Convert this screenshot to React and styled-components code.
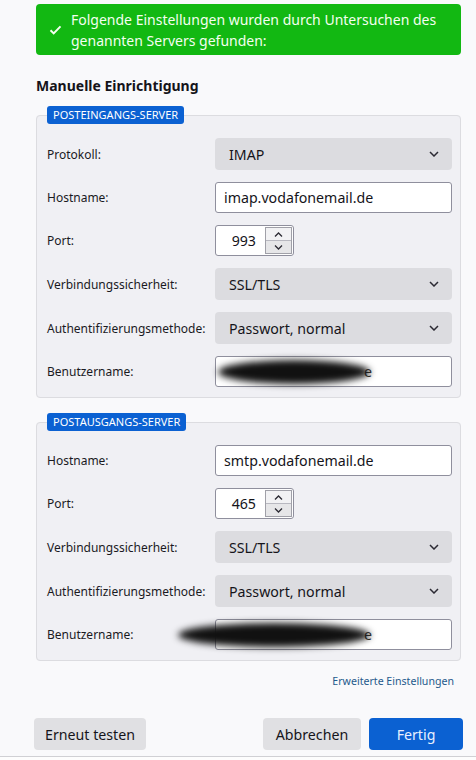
import React from "react";
import styled, { createGlobalStyle } from "styled-components";

const Global = createGlobalStyle`
  html, body { margin: 0; padding: 0; background: #f9f9fb; }
  body { font-family: "Noto Sans", "Open Sans", sans-serif; color: #15141a; }
  * { box-sizing: border-box; }
`;

const Page = styled.div`
  width: 476px;
  height: 760px;
  display: flex;
  flex-direction: column;
  overflow: hidden;
`;

const Main = styled.div`
  flex: 1;
  padding: 4px 15px 0 36px;
  display: flex;
  flex-direction: column;
`;

const Banner = styled.div`
  background: #12b812;
  color: #f4fff0;
  border-radius: 4px;
  height: 51px;
  display: flex;
  align-items: center;
  gap: 9px;
  padding: 0 12px 0 13px;
  font-size: 14px;
  line-height: 21px;
`;

const Heading = styled.h2`
  margin: 21px 0 10px;
  font-size: 14px;
  font-weight: 700;
  line-height: 20px;
`;

const Fieldset = styled.fieldset`
  margin: 0 0 ${p => p.$mb || 0}px;
  padding: 0 10px 10px;
  border: 1px solid #dcdce0;
  border-radius: 4px;
  background: #f0f0f4;
  min-width: 0;
`;

const Legend = styled.legend`
  background: #0b61d2;
  color: #fff;
  font-size: 11px;
  line-height: 18px;
  height: 18px;
  padding: 0 6px;
  border-radius: 3px;
  margin-left: 0;
`;

const Grid = styled.div`
  display: grid;
  grid-template-columns: 168px 237px;
  row-gap: 12px;
  margin-top: 14px;
  align-items: center;
`;

const Label = styled.div`
  font-size: 12px;
  color: #1a1a1f;
  white-space: nowrap;
`;

const Select = styled.div`
  height: 32px;
  border-radius: 4px;
  background: #dcdce0;
  display: flex;
  align-items: center;
  justify-content: space-between;
  padding: 0 13px 0 14px;
  font-size: 14.2px;
`;

const Input = styled.div`
  position: relative;
  height: 31px;
  width: 237px;
  background: #fff;
  border: 1px solid #8f8f9d;
  border-radius: 3px;
  display: flex;
  align-items: center;
  padding: 0 8px;
  font-size: 14.2px;
`;

const PortBox = styled.div`
  height: 31px;
  width: 79px;
  background: #fff;
  border: 1px solid #8f8f9d;
  border-radius: 3px;
  display: flex;
  align-items: stretch;
  font-size: 14.2px;
`;

const PortValue = styled.div`
  flex: 1;
  display: flex;
  align-items: center;
  justify-content: flex-end;
  padding-right: 9px;
`;

const Spinner = styled.div`
  width: 27px;
  display: flex;
  flex-direction: column;
  margin: 1px 1px 1px 0;
  border: 1px solid #a0a0a8;
`;

const SpinBtn = styled.div`
  flex: 1;
  display: flex;
  align-items: center;
  justify-content: center;
  background: ${p => (p.$down ? "#e6e6e8" : "#f2f2f4")};
  border-top: ${p => (p.$down ? "1px solid #b8b8c0" : "none")};
`;

const Blob = styled.div`
  position: absolute;
  left: ${p => p.$l}px;
  top: 3px;
  width: ${p => p.$w}px;
  height: 24px;
  background: #111;
  border-radius: 50%;
  filter: blur(3.5px);
`;

const Hidden = styled.span`
  color: #333;
  padding-left: 140px;
`;

const LinkRow = styled.div`
  display: flex;
  justify-content: flex-end;
  padding: 13px 7px 0 0;
`;

const Link = styled.a`
  font-size: 10.6px;
  color: #1f5a8c;
  text-decoration: none;
`;

const Footer = styled.div`
  display: flex;
  justify-content: space-between;
  align-items: center;
  padding: 26px 13px 0 34px;
`;

const Group = styled.div`
  display: flex;
  gap: 8px;
`;

const Button = styled.button`
  height: 32px;
  width: ${p => p.$w}px;
  border: none;
  border-radius: 4px;
  font-family: inherit;
  font-size: 14.2px;
  background: ${p => (p.$primary ? "#0b61d2" : "#e0e0e3")};
  color: ${p => (p.$primary ? "#e8f0ff" : "#15141a")};
  padding: 0;
`;

const BottomBar = styled.div`
  height: 4px;
  border-top: 1px solid #d0d0d4;
  background: #fdfdfd;
  margin-top: 6px;
`;

const Chevron = () => (
  <svg width="10" height="6" viewBox="0 0 10 6">
    <path d="M1 1l4 4 4-4" fill="none" stroke="#2b2a33" strokeWidth="1.5" />
  </svg>
);

const Check = () => (
  <svg width="13" height="10" viewBox="0 0 13 10" style={{ flex: "none" }}>
    <path d="M1.5 5.2l3.2 3.2 6.8-7" fill="none" stroke="#f4fff0" strokeWidth="2" />
  </svg>
);

const Caret = ({ up }) => (
  <svg width="9" height="5" viewBox="0 0 9 5">
    <path d={up ? "M1 4.5l3.5-3.5 3.5 3.5" : "M1 0.5l3.5 3.5 3.5-3.5"} fill="none" stroke="#2b2a33" strokeWidth="1.3" />
  </svg>
);

const Drop = ({ children }) => (
  <Select>
    <span>{children}</span>
    <Chevron />
  </Select>
);

const Port = ({ value }) => (
  <PortBox>
    <PortValue>{value}</PortValue>
    <Spinner>
      <SpinBtn><Caret up /></SpinBtn>
      <SpinBtn $down><Caret /></SpinBtn>
    </Spinner>
  </PortBox>
);

export default function App() {
  return (
    <Page>
      <Global />
      <Main>
        <Banner>
          <Check />
          <span>Folgende Einstellungen wurden durch Untersuchen des genannten Servers gefunden:</span>
        </Banner>
        <Heading>Manuelle Einrichtigung</Heading>
        <Fieldset $mb={15}>
          <Legend>POSTEINGANGS-SERVER</Legend>
          <Grid>
            <Label>Protokoll:</Label>
            <Drop>IMAP</Drop>
            <Label>Hostname:</Label>
            <Input>imap.vodafonemail.de</Input>
            <Label>Port:</Label>
            <Port value="993" />
            <Label>Verbindungssicherheit:</Label>
            <Drop>SSL/TLS</Drop>
            <Label>Authentifizierungsmethode:</Label>
            <Drop>Passwort, normal</Drop>
            <Label>Benutzername:</Label>
            <Input>
              <Hidden>e</Hidden>
              <Blob $l={2} $w={152} />
            </Input>
          </Grid>
        </Fieldset>
        <Fieldset>
          <Legend>POSTAUSGANGS-SERVER</Legend>
          <Grid>
            <Label>Hostname:</Label>
            <Input>smtp.vodafonemail.de</Input>
            <Label>Port:</Label>
            <Port value="465" />
            <Label>Verbindungssicherheit:</Label>
            <Drop>SSL/TLS</Drop>
            <Label>Authentifizierungsmethode:</Label>
            <Drop>Passwort, normal</Drop>
            <Label>Benutzername:</Label>
            <Input>
              <Hidden>e</Hidden>
              <Blob $l={-38} $w={192} />
            </Input>
          </Grid>
        </Fieldset>
        <LinkRow>
          <Link href="#">Erweiterte Einstellungen</Link>
        </LinkRow>
      </Main>
      <Footer>
        <Button $w={112}>Erneut testen</Button>
        <Group>
          <Button $w={98}>Abbrechen</Button>
          <Button $w={94} $primary>Fertig</Button>
        </Group>
      </Footer>
      <BottomBar />
    </Page>
  );
}
